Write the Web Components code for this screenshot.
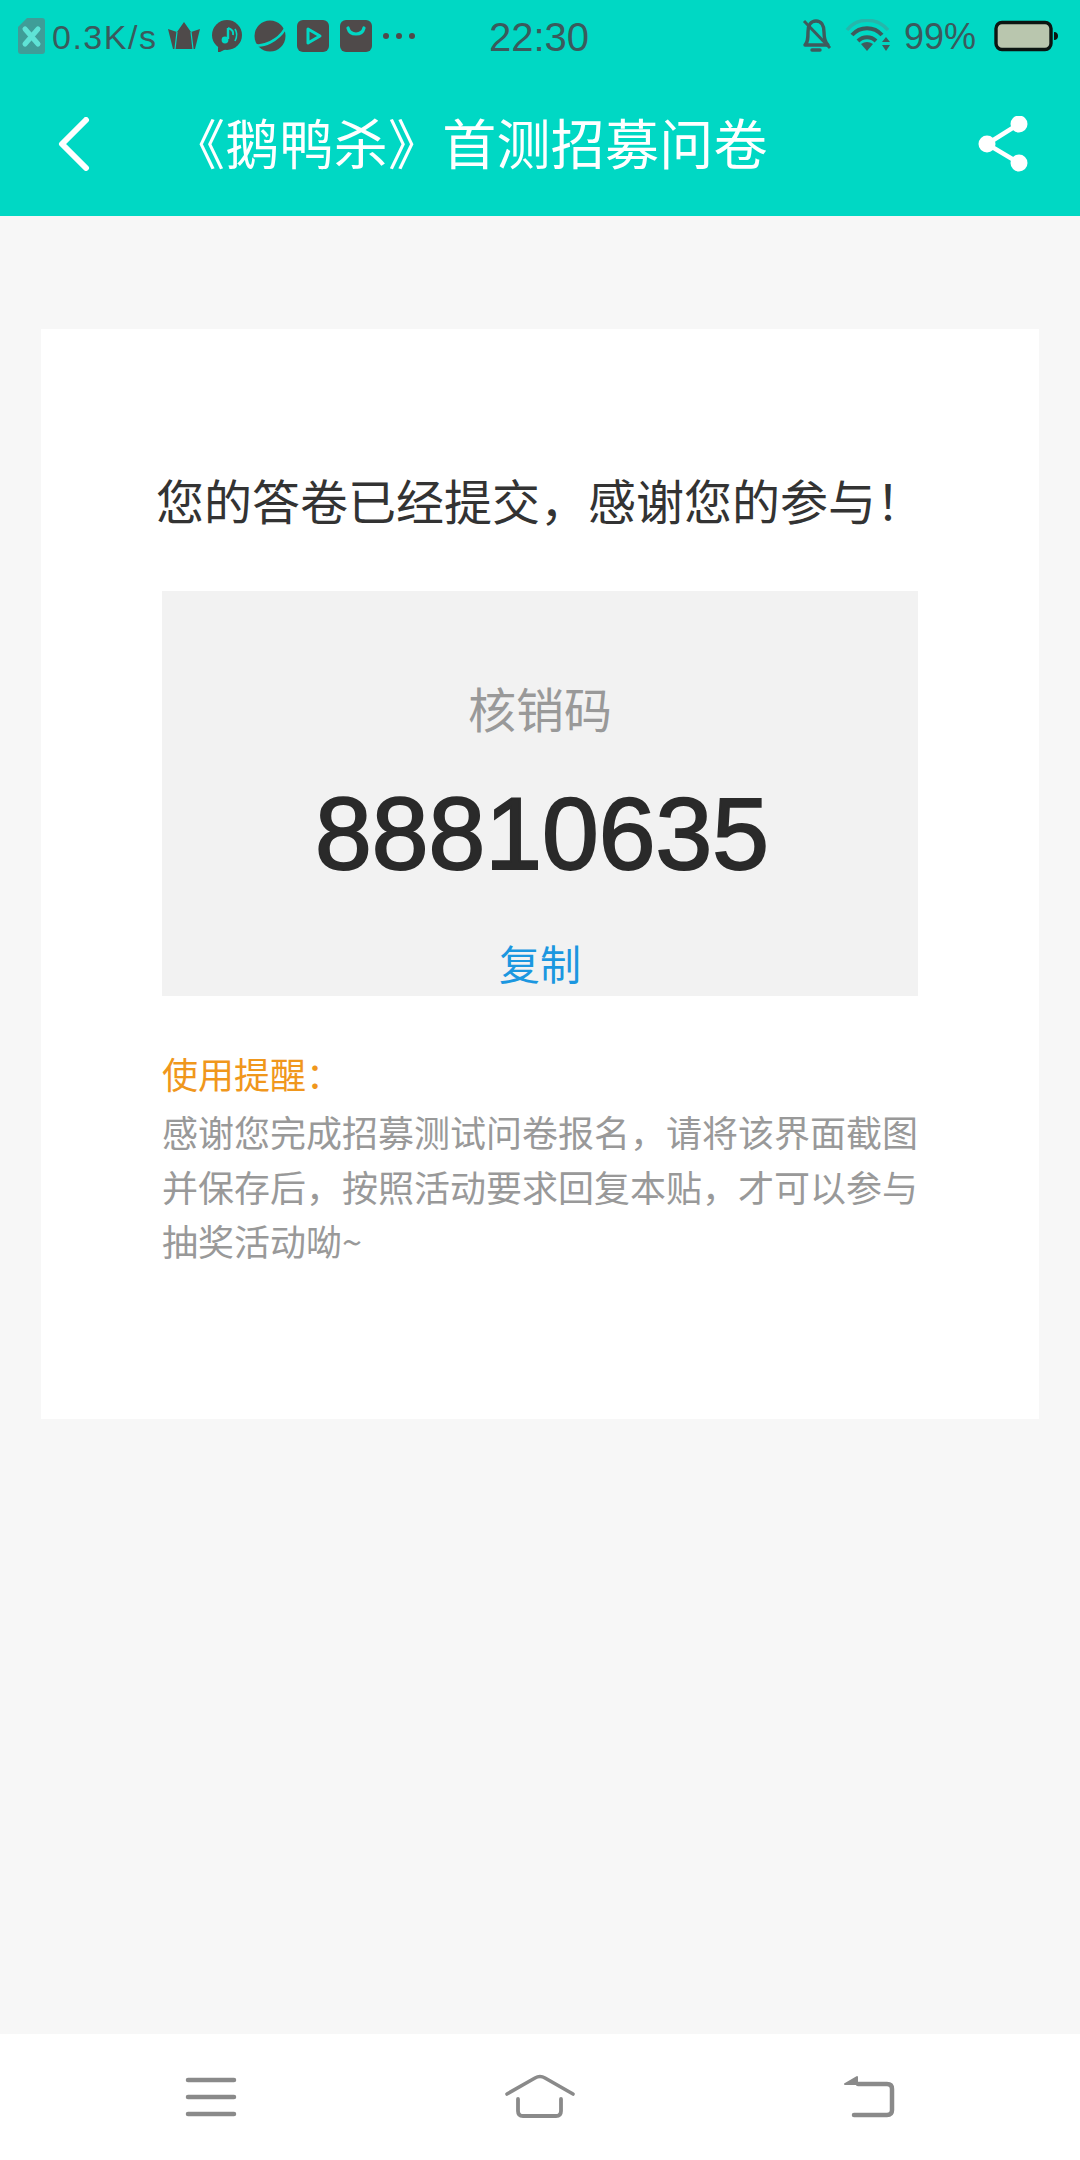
<!DOCTYPE html>
<html lang="zh-CN">
<head>
<meta charset="utf-8">
<title>《鹅鸭杀》首测招募问卷</title>
<style>
  html, body { margin: 0; padding: 0; background: #f7f7f7; }
  body { font-family: "Noto Sans CJK SC", "Liberation Sans", sans-serif; }
</style>
</head>
<body>
<survey-page>
  <app-header slot="header" title-text="《鹅鸭杀》首测招募问卷"></app-header>
  <result-card code="88810635">
    <span slot="title">您的答卷已经提交，感谢您的参与！</span>
    <span slot="tip-title">使用提醒：</span>
    <span slot="tip">感谢您完成招募测试问卷报名，请将该界面截图并保存后，按照活动要求回复本贴，才可以参与抽奖活动呦~</span>
  </result-card>
  <nav-bar slot="footer"></nav-bar>
</survey-page>

<script>
/**
 * SurveyPage
 */
customElements.define('survey-page', class SurveyPage extends HTMLElement {
constructor() {
  super();
  this.attachShadow({mode: 'open'}).innerHTML = `
<style>
  :host {
    display: flex;
    flex-direction: column;
    width: 1080px;
    height: 2160px;
    background: #f7f7f7;
    overflow: hidden;
  }
  main {
    flex: 1;
    padding: 113px 41px 0;
  }
</style>
<slot name="header"></slot>
<main><slot></slot></main>
<slot name="footer"></slot>
`;
}
});

/**
 * StatusBar
 */
customElements.define('status-bar', class StatusBar extends HTMLElement {
constructor() {
  super();
  this.attachShadow({mode: 'open'}).innerHTML = `
<style>
  :host {
    display: grid;
    grid-template-columns: 1fr auto 1fr;
    align-items: center;
    height: 72px;
    padding: 0 22px 0 18px;
    color: #3a5a5c;
    font-family: "Liberation Sans", sans-serif;
  }
  svg { display: block; flex: none; }
  .left, .right { display: flex; align-items: center; }
  .left { gap: 11px; }
  .sim { margin-right: -4px; }
  .speed { font-size: 34px; letter-spacing: 1.5px; margin-top: 2px; }
  .time { font-size: 40px; margin-top: 2px; padding-left: 2px; }
  .right { justify-content: flex-end; }
  .pct { font-size: 36px; margin: 2px 18px 0 13px; }
  .bell { margin-right: 13px; }
</style>
<div class="left">
  <svg class="sim" width="27" height="36" viewBox="18 18 27 36">
    <path d="M27 18H42a3 3 0 0 1 3 3V51a3 3 0 0 1-3 3H21a3 3 0 0 1-3-3V27Z" fill="#3f9d98"/>
    <path d="M25 29L38 44M38 29L25 44" stroke="#5fe3d6" stroke-width="5" stroke-linecap="round"/>
  </svg>
  <span class="speed">0.3K/s</span>
  <svg width="32" height="32" viewBox="169 20 32 32">
    <path d="M169 29L178 32L185 22L192 32L201 29L196 49H174Z" fill="#4f4a4a"/>
    <path d="M178 32L176 49M192 32L194 49" stroke="#00d8c4" stroke-width="1.2"/>
  </svg>
  <svg width="32" height="32" viewBox="212 20 32 32">
    <circle cx="228" cy="35" r="15" fill="#4f4a4a"/>
    <path d="M219 47L219 53L227 49Z" fill="#4f4a4a"/>
    <path d="M229 28V39" stroke="#00d8c4" stroke-width="2.4"/>
    <circle cx="226" cy="40" r="3.4" fill="#00d8c4"/>
    <path d="M229 28C232 29 235 31 234 35" fill="none" stroke="#00d8c4" stroke-width="2"/>
    <path d="M236 29C238 32 238 37 236 41" fill="none" stroke="#00d8c4" stroke-width="1.6"/>
  </svg>
  <svg width="32" height="32" viewBox="255 20 32 32">
    <circle cx="271" cy="36" r="15.5" fill="#4f4a4a"/>
    <path d="M256 45C264 47 279 41 286 29" fill="none" stroke="#00d8c4" stroke-width="2.6"/>
  </svg>
  <svg width="32" height="32" viewBox="299 20 32 32">
    <rect x="299" y="20" width="32" height="32" rx="6" fill="#4f4a4a"/>
    <path d="M310 29L322 36L310 43Z" fill="none" stroke="#00d8c4" stroke-width="3" stroke-linejoin="round"/>
  </svg>
  <svg width="32" height="32" viewBox="342 20 32 32">
    <rect x="342" y="20" width="32" height="32" rx="6" fill="#4f4a4a"/>
    <path d="M350 28C352 36 364 36 366 28" fill="none" stroke="#00d8c4" stroke-width="3.2" stroke-linecap="round"/>
  </svg>
  <svg width="32" height="8" viewBox="385 32 32 8">
    <circle cx="388" cy="36" r="3" fill="#4f4a4a"/>
    <circle cx="401" cy="36" r="3" fill="#4f4a4a"/>
    <circle cx="414" cy="36" r="3" fill="#4f4a4a"/>
  </svg>
</div>
<div class="time">22:30</div>
<div class="right">
  <svg class="bell" width="31" height="36" viewBox="802 18 31 36">
    <path d="M806 45C809 42 809 38 809 32C809 25 812 21 817 21C822 21 825 25 825 32C825 38 826 42 829 45Z" fill="none" stroke="#3f5a5c" stroke-width="3.4" stroke-linejoin="round"/>
    <path d="M813 50H821" stroke="#3f5a5c" stroke-width="3.4" stroke-linecap="round"/>
    <path d="M805 21L831 48" stroke="#3f5a5c" stroke-width="3"/>
  </svg>
  <svg width="46" height="34" viewBox="844 20 46 34">
    <path d="M846 31C856 18 876 18 887 31" fill="none" stroke="#26b6ab" stroke-width="3.4"/>
    <path d="M851 36C859 27 873 27 881 36" fill="none" stroke="#3f5a5c" stroke-width="4"/>
    <path d="M857 42C862 37 870 37 875 42" fill="none" stroke="#3f5a5c" stroke-width="4"/>
    <path d="M860 45Q866 41 872 45L866 52Z" fill="#3f5a5c"/>
    <path d="M885 38L889 43H881ZM885 52L881 46H889Z" fill="#3f5a5c"/>
  </svg>
  <span class="pct">99%</span>
  <svg width="64" height="32" viewBox="994 20 64 32">
    <rect x="996" y="22.5" width="55" height="27" rx="6" fill="#b9c6ae" stroke="#0b1512" stroke-width="3.4"/>
    <path d="M1054 32C1057 32 1058 34 1058 36C1058 38 1057 40 1054 40Z" fill="#0b1512"/>
  </svg>
</div>
`;
}
});

/**
 * AppHeader
 */
customElements.define('app-header', class AppHeader extends HTMLElement {
constructor() {
  super();
  this.attachShadow({mode: 'open'}).innerHTML = `
<style>
  :host {
    display: block;
    height: 216px;
    background: #00d8c4;
  }
  .toolbar {
    display: flex;
    align-items: center;
    height: 144px;
    padding: 0 50px 0 58px;
    color: #fff;
  }
  svg { display: block; flex: none; }
  .title {
    flex: 1;
    margin-left: 81px;
    font-size: 54px;
    letter-spacing: 0.25px;
    line-height: 1;
    white-space: nowrap;
    transform: translateY(-2px);
  }
</style>
<status-bar></status-bar>
<div class="toolbar">
  <svg width="32" height="54" viewBox="58 119 32 54">
    <path d="M86 122L62 146L86 170" fill="none" stroke="#fff" stroke-width="6" stroke-linecap="round" stroke-linejoin="round"/>
  </svg>
  <span class="title"></span>
  <svg width="52" height="56" viewBox="978 118 52 56">
    <path d="M1019 126L987 146L1019 165" fill="none" stroke="#fff" stroke-width="4.5"/>
    <circle cx="1019" cy="126" r="8.5" fill="#fff"/>
    <circle cx="987" cy="146" r="8.5" fill="#fff"/>
    <circle cx="1019" cy="165" r="8.5" fill="#fff"/>
  </svg>
</div>
`;
  this.shadowRoot.querySelector('.title').textContent = this.getAttribute('title-text');
}
});

/**
 * ResultCard
 */
customElements.define('result-card', class ResultCard extends HTMLElement {
constructor() {
  super();
  this.attachShadow({mode: 'open'}).innerHTML = `
<style>
  :host {
    display: block;
    height: 1090px;
    box-sizing: border-box;
    padding: 0 121px;
    background: #fff;
  }
  .title {
    display: flex;
    justify-content: center;
    height: 262px;
    padding-top: 138px;
    box-sizing: border-box;
    font-size: 48px;
    line-height: 64px;
    color: #333;
    white-space: nowrap;
  }
  .code-box {
    display: flex;
    flex-direction: column;
    align-items: center;
    height: 405px;
    background: #f2f2f2;
  }
  .label {
    margin-top: 86px;
    font-size: 48px;
    line-height: 60px;
    color: #999;
  }
  .code {
    margin-top: 42px;
    padding-left: 4px;
    font-family: "Liberation Sans", sans-serif;
    font-size: 102px;
    line-height: 110px;
    color: #2a2a2a;
    -webkit-text-stroke: 2px #2a2a2a;
  }
  .copy {
    margin-top: 47px;
    font-size: 41px;
    line-height: 52px;
    color: #1b97e0;
  }
  .tip-title {
    margin-top: 52px;
    font-size: 36px;
    line-height: 50px;
    color: #f0971c;
  }
  .tip {
    margin-top: 6px;
    font-size: 36px;
    line-height: 54.5px;
    color: #999;
  }
</style>
<div class="title"><slot name="title"></slot></div>
<div class="code-box">
  <div class="label">核销码</div>
  <div class="code"></div>
  <div class="copy">复制</div>
</div>
<div class="tip-title"><slot name="tip-title"></slot></div>
<div class="tip"><slot name="tip"></slot></div>
`;
  this.shadowRoot.querySelector('.code').textContent = this.getAttribute('code');
}
});

/**
 * NavBar
 */
customElements.define('nav-bar', class NavBar extends HTMLElement {
constructor() {
  super();
  this.attachShadow({mode: 'open'}).innerHTML = `
<style>
  :host {
    display: flex;
    justify-content: space-between;
    align-items: center;
    height: 126px;
    padding: 0 185px 0 185px;
    background: #fff;
  }
  svg { display: block; }
  path { fill: none; stroke: #8a8a8a; stroke-linecap: round; stroke-linejoin: round; }
</style>
<svg width="52" height="44" viewBox="185 2075 52 44">
  <path d="M188 2080H234M188 2097H234M188 2114H234" stroke-width="4.5"/>
</svg>
<svg width="72" height="46" viewBox="505 2074 72 46">
  <path d="M508 2094L536 2078Q541 2075 546 2078L574 2094" stroke-width="3.6"/>
  <path d="M519 2099V2111Q519 2116 524 2116H557Q562 2116 562 2111V2099" stroke-width="3.8"/>
</svg>
<svg width="52" height="44" viewBox="843 2074 52 44">
  <path d="M858 2083H887Q892 2083 892 2088V2109Q892 2114 887 2114H854" stroke-width="4.5"/>
  <path d="M857 2076V2083H845Z" stroke-width="2" style="fill:#8a8a8a"/>
</svg>
`;
}
});
</script>
</body>
</html>
